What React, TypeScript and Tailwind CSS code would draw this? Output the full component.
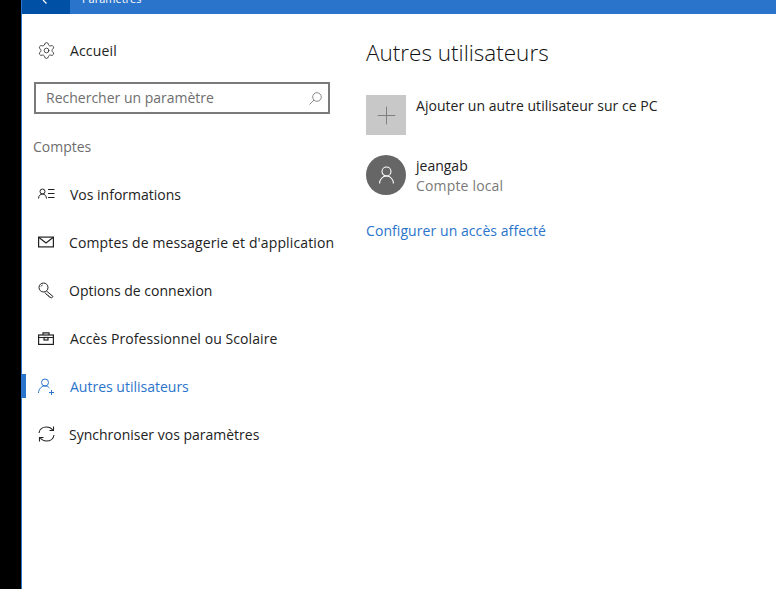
import { Plus, Settings } from "lucide-react";
import type { ReactNode } from "react";

const FONT = "font-['Open_Sans','Noto_Sans',sans-serif]";

function IdIcon() {
  return (
    <svg width="17" height="12" viewBox="0 0 17 12" fill="none" stroke="currentColor" strokeWidth="1">
      <circle cx="4.500" cy="3.500" r="2.500" />
      <path d="M0.500 10.500c0-2.500 1.800-4.500 4-4.500s4 2 4 4.500" />
      <path d="M10 1.500h6.500M10 5.500h6.500M10 9.500h6.500" />
    </svg>
  );
}

function MailIcon() {
  return (
    <svg width="16" height="12" viewBox="0 0 16 12" fill="none" stroke="currentColor" strokeWidth="1.200">
      <rect x="0.600" y="1.100" width="14.800" height="9.800" />
      <path d="M1 1.500l7 5.500 7-5.500" />
    </svg>
  );
}

function KeyIcon() {
  return (
    <svg width="17" height="17" viewBox="0 0 17 17" fill="none" stroke="currentColor" strokeWidth="1">
      <circle cx="5.500" cy="5.500" r="4.500" />
      <path d="M8.500 9l6.500 5.500-1.500 1.500-1.500-1-1 0-.5-1.500-1.500-.5-2-2.500" />
      <path d="M3 4.500c.3-.8.8-1.200 1.500-1.500" />
    </svg>
  );
}

function BriefcaseIcon() {
  return (
    <svg width="16" height="13" viewBox="0 0 16 13" fill="none" stroke="currentColor" strokeWidth="1.200">
      <rect x="0.600" y="3" width="14.800" height="9.400" />
      <path d="M5 3V0.800h6V3M0.600 5.500h14.800" />
      <rect x="6" y="5.500" width="4" height="2.500" />
    </svg>
  );
}

function PersonAddIcon() {
  return (
    <svg width="17" height="17" viewBox="0 0 17 17" fill="none" stroke="currentColor" strokeWidth="1">
      <circle cx="7" cy="4.500" r="3.500" />
      <path d="M0.500 15c0-3.800 2.800-7 6.500-7 1.800 0 3.300.7 4.500 2" />
      <path d="M11 14.500h5M13.500 12v5" />
    </svg>
  );
}

function SyncIcon() {
  return (
    <svg width="17" height="16" viewBox="0 0 17 16" fill="none" stroke="currentColor" strokeWidth="1.100">
      <path d="M1 7c.4-3.400 3.400-6 7.500-6 2.700 0 4.900 1.200 6.300 3.200" />
      <path d="M15.500 0.500v4h-4" />
      <path d="M16 9c-.4 3.400-3.400 6-7.500 6-2.700 0-4.900-1.200-6.300-3.200" />
      <path d="M1.500 15.500v-4h4" />
    </svg>
  );
}

function SearchGlass() {
  return (
    <svg width="13" height="13" viewBox="0 0 13 13" fill="none" stroke="#8a8a8a" strokeWidth="1">
      <circle cx="8" cy="5" r="4.300" />
      <path d="M5 8l-4.500 4.500" />
    </svg>
  );
}

function AvatarGlyph() {
  return (
    <svg width="15" height="18" viewBox="0 0 15 18" fill="none" stroke="white" strokeWidth="1.100">
      <circle cx="7.500" cy="5.500" r="4.500" />
      <path d="M0.600 17.500c0-4 3-7.500 6.900-7.500s6.900 3.500 6.900 7.500" />
    </svg>
  );
}

type NavEntry = { label: string; icon: ReactNode; active?: boolean; indent: string; tracking?: string };

const items: NavEntry[] = [
  { label: "Vos informations", icon: <IdIcon />, indent: "w-[32px]" },
  { label: "Comptes de messagerie et d'application", icon: <MailIcon />, indent: "w-[31px]", tracking: "tracking-[0.13px]" },
  { label: "Options de connexion", icon: <KeyIcon />, indent: "w-[31px]" },
  { label: "Accès Professionnel ou Scolaire", icon: <BriefcaseIcon />, indent: "w-[32px]", tracking: "tracking-[0.08px]" },
  { label: "Autres utilisateurs", icon: <PersonAddIcon />, active: true, indent: "w-[32px]" },
  { label: "Synchroniser vos paramètres", icon: <SyncIcon />, indent: "w-[31px]" },
];

function NavRow({ label, icon, active, indent, tracking }: NavEntry) {
  return (
    <div className={`h-12 flex items-center ${active ? "text-[#2b74cb]" : "text-[#222]"}`}>
      <div className={`w-[4px] h-6 ${active ? "bg-[#2b74cb]" : ""}`} />
      <div className="w-[12px]" />
      <div className={`${indent} flex items-center`}>{icon}</div>
      <span className={`text-[14px] whitespace-nowrap ${tracking ?? ""}`}>{label}</span>
    </div>
  );
}

export default function App() {
  return (
    <div className={`${FONT} w-[776px] h-[589px] flex bg-black overflow-hidden`}>
      <div className="w-[21px] shrink-0" />
      <div className="w-px shrink-0 bg-[#2b74cb]" />
      <div className="flex-1 flex flex-col bg-white">
        <header className="h-[14px] shrink-0 flex overflow-hidden bg-[#2b74cb] text-white">
          <div className="w-[48px] bg-[#0050a5] pl-[20px]">
            <svg width="6" height="4" viewBox="0 0 6 4" fill="none" stroke="white" strokeWidth="1.200">
              <path d="M1 0L4.500 3.500" />
            </svg>
          </div>
          <div className="pl-[12px] text-[11px] leading-[10px] -mt-[6px]">Paramètres</div>
        </header>
        <div className="flex-1 flex">
          <aside className="w-[344px] shrink-0">
            <div className="h-[68px] pt-[4px] pl-[15px] flex items-center">
              <Settings size={19} strokeWidth={1} className="text-[#222]" />
              <span className="ml-[14px] text-[14px] tracking-[0.15px] text-[#222]">Accueil</span>
            </div>
            <div className="ml-[12px] w-[296px] h-[32px] border-2 border-[#7a7a7a] flex items-center pl-[10px] pr-[6px]">
              <span className="flex-1 text-[14px] text-[#6e6e6e] -mt-[2px]">Rechercher un paramètre</span>
              <SearchGlass />
            </div>
            <div className="mt-[23px] ml-[11px] text-[14px] leading-[20px] text-[#6e6e6e]">Comptes</div>
            <nav className="mt-[13px]">
              {items.map((item) => (
                <NavRow key={item.label} {...item} />
              ))}
            </nav>
          </aside>
          <main className="flex-1 pt-[23px]">
            <h1 className="text-[22.500px] font-light leading-[32px] text-[#111]">Autres utilisateurs</h1>
            <div className="mt-[26px] flex">
              <div className="w-10 h-10 bg-[#c8c8c8] flex items-center justify-center">
                <Plus size={29} strokeWidth={0.8} className="text-[#7d7d7d]" />
              </div>
              <div className="ml-[10px] text-[14px] tracking-[0.03px] leading-[20px] text-[#222] mt-[1px]">
                Ajouter un autre utilisateur sur ce PC
              </div>
            </div>
            <div className="mt-[20px] flex">
              <div className="w-10 h-10 rounded-full bg-[#666] flex items-center justify-center">
                <AvatarGlyph />
              </div>
              <div className="ml-[10px] text-[14px] leading-[20px] mt-[1px]">
                <div className="text-[#222]">jeangab</div>
                <div className="text-[#7a7a7a] tracking-[0.17px]">Compte local</div>
              </div>
            </div>
            <div className="mt-[25px] text-[14px] tracking-[0.07px] leading-[20px] text-[#2b74cb]">Configurer un accès affecté</div>
          </main>
        </div>
      </div>
    </div>
  );
}
